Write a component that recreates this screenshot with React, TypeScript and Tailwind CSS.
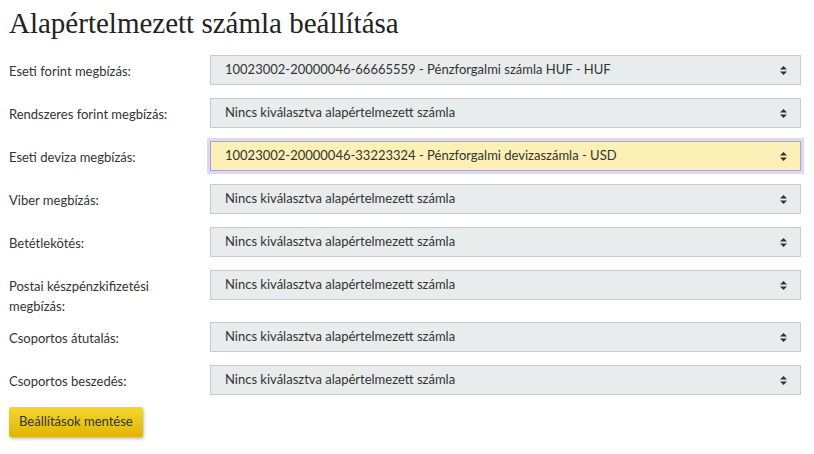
import React from 'react'

const EMPTY = 'Nincs kiválasztva alapértelmezett számla'

const ROWS: { label: string; value: string; active?: boolean; tall?: boolean }[] = [
  { label: 'Eseti forint megbízás:', value: '10023002-20000046-66665559 - Pénzforgalmi számla HUF - HUF' },
  { label: 'Rendszeres forint megbízás:', value: EMPTY },
  { label: 'Eseti deviza megbízás:', value: '10023002-20000046-33223324 - Pénzforgalmi devizaszámla - USD', active: true },
  { label: 'Viber megbízás:', value: EMPTY },
  { label: 'Betétlekötés:', value: EMPTY },
  { label: 'Postai készpénzkifizetési megbízás:', value: EMPTY, tall: true },
  { label: 'Csoportos átutalás:', value: EMPTY },
  { label: 'Csoportos beszedés:', value: EMPTY },
]

function Arrows() {
  return (
    <svg width="7" height="9" viewBox="0 0 7 9" className="shrink-0">
      <path d="M3.5 0 L7 3.6 H0 Z" fill="#333" />
      <path d="M3.5 9 L7 5.4 H0 Z" fill="#333" />
    </svg>
  )
}

export default function App() {
  return (
    <div className="min-h-[454px] bg-white px-[9px] pt-[5px] font-['Lato',sans-serif] text-[13px] text-[#333]">
      <h1 className="mb-[14px] font-['Liberation_Serif',serif] text-[29px] leading-[36px] text-[#222]">
        Alapértelmezett számla beállítása
      </h1>

      <div className="flex flex-col gap-[13px]">
        {ROWS.map((row) => (
          <div key={row.label} className={`flex items-start ${row.tall ? 'h-[39px]' : 'h-[30px]'}`}>
            <label className="w-[201px] shrink-0 pr-[40px] pt-[6px] leading-[20px]">{row.label}</label>
            <div
              className={`flex h-[30px] w-[591px] items-center justify-between border pl-[14px] pr-[13px] ${
                row.active
                  ? 'border-[#a9a3d8] bg-[#fdf0b6] shadow-[0_0_0_3px_#dcd8f0]'
                  : 'border-[#c6cccc] bg-[#e9ecec]'
              }`}
            >
              <span className="truncate">{row.value}</span>
              <Arrows />
            </div>
          </div>
        ))}
      </div>

      <button className="mt-[12px] h-[30px] rounded-[2px] bg-gradient-to-b from-[#f6d62a] to-[#dfb502] px-[10px] text-[13px] text-[#333] shadow-[1px_2px_3px_rgba(0,0,0,0.25)]">
        Beállítások mentése
      </button>
    </div>
  )
}
